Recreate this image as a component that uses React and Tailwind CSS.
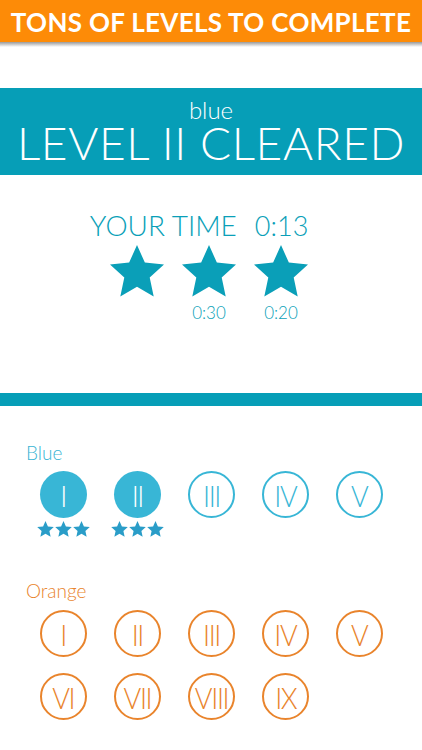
import { useState } from 'react';

const TEAL = '#0a9fb8';

function Star({ className, color }) {
  return (
    <svg viewBox="0 0 54 52" className={className}>
      <polygon
        fill={color}
        points="27,0 34.85,17.6 54,19.6 39.7,32.5 43.7,51.4 27,41.75 10.3,51.4 14.3,32.5 0,19.6 19.15,17.6"
      />
    </svg>
  );
}

function LevelCircle({ label, filled, color, stars }) {
  return (
    <div className="relative flex flex-col items-center">
      <div
        className="w-[47px] h-[47px] rounded-full flex items-center justify-center text-[30px] font-light leading-none"
        style={{
          backgroundColor: filled ? color : 'transparent',
          border: filled ? 'none' : `2px solid ${color}`,
          color: filled ? '#fff' : color,
        }}
      >
        <span className="tracking-[-1.5px] scale-x-90">{label}</span>
      </div>
      {stars && (
        <div className="absolute top-[50px] flex gap-[1px]">
          {[0, 1, 2].map(i => (
            <Star key={i} className="w-[17px] h-[16px]" color="#2a9dc8" />
          ))}
        </div>
      )}
    </div>
  );
}

export default function App() {
  const [blue] = useState([
    { label: 'I', done: true },
    { label: 'II', done: true },
    { label: 'III' },
    { label: 'IV' },
    { label: 'V' },
  ]);
  const orange = ['I', 'II', 'III', 'IV', 'V', 'VI', 'VII', 'VIII', 'IX'];

  return (
    <div className="w-[422px] h-[750px] bg-white overflow-hidden font-['Lato',sans-serif]">
      {/* Top promo banner */}
      <div className="h-[42px] bg-[#fd8b07] flex items-center justify-center">
        <h1 className="text-white font-bold text-[26px] tracking-[0.3px] leading-none whitespace-nowrap pt-[1px]">
          TONS OF LEVELS TO COMPLETE
        </h1>
      </div>
      <div className="h-[5px] bg-gradient-to-b from-[#9a9a9a] to-white" />

      {/* Cleared banner */}
      <div className="mt-[41px] h-[87px] bg-[#069eb7] flex flex-col items-center text-white font-light">
        <div className="text-[24px] leading-[20px] mt-[12px]">blue</div>
        <div className="text-[46px] leading-none tracking-[0.6px]">LEVEL II CLEARED</div>
      </div>

      {/* Time & stars */}
      <div className="flex flex-col items-center mt-[36px]" style={{ color: TEAL }}>
        <div className="flex items-baseline font-light text-[28px] leading-none mr-[24px]">
          <span>YOUR TIME</span>
          <span className="ml-[18px] text-[27px]">0:13</span>
        </div>
        <div className="flex gap-[18px] mt-[6px] mr-[4px]">
          {['', '0:30', '0:20'].map((t, i) => (
            <div key={i} className="flex flex-col items-center w-[54px]">
              <Star className="w-[54px] h-[52px]" color={TEAL} />
              <span className="text-[17px] font-light leading-none mt-[7px] h-[17px]">{t}</span>
            </div>
          ))}
        </div>
      </div>

      <div className="mt-[72px] h-[13px] bg-[#069eb7]" />

      {/* Blue levels */}
      <div className="pl-[26px] mt-[37px]">
        <div className="text-[19px] font-light text-[#3ab5d4] leading-none">Blue</div>
        <div className="pl-[14px] mt-[9px] grid grid-cols-[repeat(5,47px)] gap-x-[27px]">
          {blue.map(l => (
            <LevelCircle key={l.label} label={l.label} filled={l.done} color="#38b6d6" stars={l.done} />
          ))}
        </div>
      </div>

      {/* Orange levels */}
      <div className="pl-[26px] mt-[63px]">
        <div className="text-[19px] font-light text-[#e9842c] leading-none">Orange</div>
        <div className="pl-[14px] mt-[10px] grid grid-cols-[repeat(5,47px)] gap-x-[27px] gap-y-[16px]">
          {orange.map(l => (
            <LevelCircle key={l} label={l} color="#e9842c" />
          ))}
        </div>
      </div>
    </div>
  );
}
